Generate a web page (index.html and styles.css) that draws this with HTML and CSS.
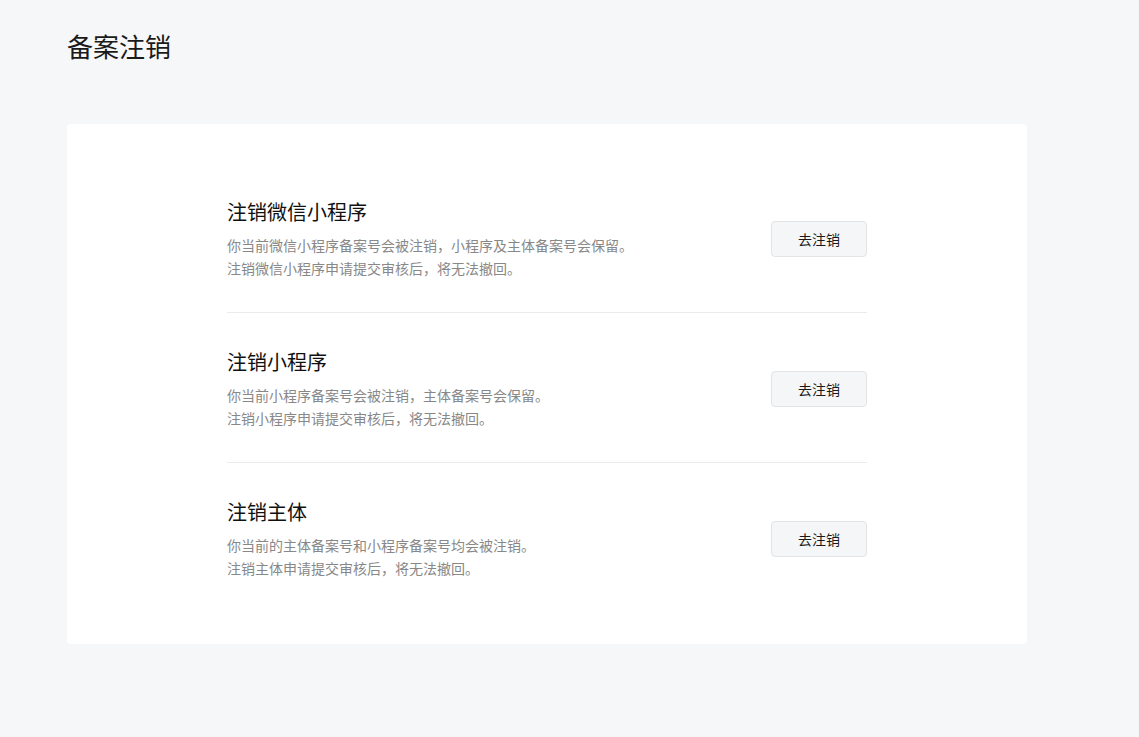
FILE: index.html
```html
<!DOCTYPE html>
<html lang="zh-CN">
<head>
    <meta charset="UTF-8">
    <meta name="viewport" content="width=device-width, initial-scale=1.0">
    <title>备案注销</title>
    <link rel="stylesheet" href="styles.css">
</head>
<body>
    <div class="page">
        <h1 class="page-title">备案注销</h1>

        <div class="card">
            <div class="cancel-item">
                <div class="cancel-info">
                    <h2 class="cancel-title">注销微信小程序</h2>
                    <p class="cancel-desc">你当前微信小程序备案号会被注销，小程序及主体备案号会保留。</p>
                    <p class="cancel-desc">注销微信小程序申请提交审核后，将无法撤回。</p>
                </div>
                <button class="cancel-btn">去注销</button>
            </div>

            <div class="cancel-item">
                <div class="cancel-info">
                    <h2 class="cancel-title">注销小程序</h2>
                    <p class="cancel-desc">你当前小程序备案号会被注销，主体备案号会保留。</p>
                    <p class="cancel-desc">注销小程序申请提交审核后，将无法撤回。</p>
                </div>
                <button class="cancel-btn">去注销</button>
            </div>

            <div class="cancel-item">
                <div class="cancel-info">
                    <h2 class="cancel-title">注销主体</h2>
                    <p class="cancel-desc">你当前的主体备案号和小程序备案号均会被注销。</p>
                    <p class="cancel-desc">注销主体申请提交审核后，将无法撤回。</p>
                </div>
                <button class="cancel-btn">去注销</button>
            </div>
        </div>
    </div>
</body>
</html>
```

FILE: styles.css
```css
* {
    margin: 0;
    padding: 0;
    box-sizing: border-box;
}

body {
    background: #f6f7f9;
    min-height: 100vh;
    font-family: "Noto Sans CJK SC", "Noto Sans", Arial, sans-serif;
    color: #1a1a1a;
}

.page {
    padding: 28px 67px 40px;
}

.page-title {
    font-size: 26px;
    line-height: 36px;
    font-weight: 400;
    color: #1a1a1a;
    margin-bottom: 60px;
}

.card {
    width: 960px;
    background: #fff;
    border-radius: 4px;
    padding: 39px 160px 32px;
}

.cancel-item {
    display: flex;
    align-items: center;
    justify-content: space-between;
    padding: 35px 0 32px;
    border-bottom: 1px solid #ebebeb;
}

.cancel-item:last-child {
    border-bottom: none;
}

.cancel-title {
    font-size: 20px;
    line-height: 28px;
    font-weight: 400;
    color: #111;
    margin-bottom: 8px;
}

.cancel-desc {
    font-size: 14px;
    line-height: 23px;
    color: #888;
}

.cancel-btn {
    width: 96px;
    height: 36px;
    background: #f5f6f7;
    border: 1px solid #e3e4e6;
    border-radius: 4px;
    font-family: inherit;
    font-size: 14px;
    color: #1a1a1a;
    cursor: pointer;
}

.cancel-btn:hover {
    background: #eceef0;
}
```
